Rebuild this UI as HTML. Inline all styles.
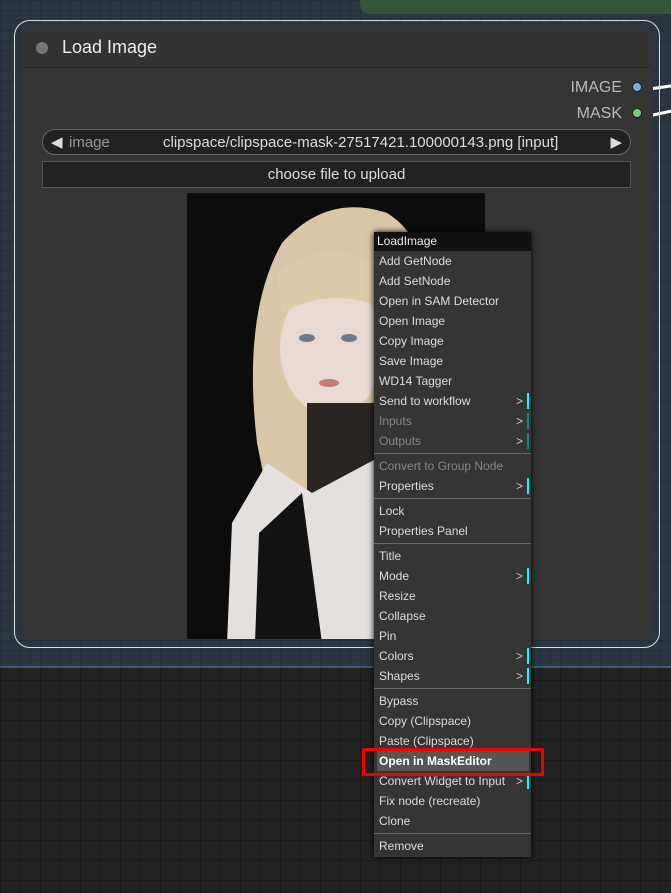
<!DOCTYPE html>
<html><head><meta charset="utf-8"><style>
*{margin:0;padding:0;box-sizing:border-box}
body{width:671px;height:893px;overflow:hidden;position:relative;font-family:"Liberation Sans",sans-serif;
background-color:#222;background-image:linear-gradient(#1a1a1a 1px,transparent 1px),linear-gradient(90deg,#1a1a1a 1px,transparent 1px);background-size:20px 20px}
.top{position:absolute;left:0;top:0;width:671px;height:668px;background-color:#2b3642;
background-image:linear-gradient(#26303b 1px,transparent 1px),linear-gradient(90deg,#26303b 1px,transparent 1px);background-size:10px 10px;border-bottom:2px solid #3d5a78}
.green{position:absolute;left:360px;top:-10px;width:330px;height:24px;background:#365535;border-radius:10px}
.outer{position:absolute;left:14px;top:20px;width:646px;height:628px;border:1.5px solid #ddd;border-radius:16px}
.node{position:absolute;left:22px;top:28px;width:631px;height:611px;background:#353535;border-radius:10px;overflow:hidden}
.title{position:absolute;left:0;top:0;width:100%;height:40px;border-bottom:1px solid #2a2a2a;background:#333}
.title .dot{position:absolute;left:14px;top:14px;width:12px;height:12px;border-radius:50%;background:#777}
.title span{position:absolute;left:40px;top:9px;color:#eee;font-size:18px}
.out{position:absolute;right:31px;color:#bbb;font-size:16px}
.sock{position:absolute;width:10px;height:10px;border-radius:50%;border:1px solid #222}
.combo{position:absolute;left:20px;top:101px;width:589px;height:26px;border:1px solid #666;border-radius:13px;background:#222;color:#ddd;font-size:15px}
.btn{position:absolute;left:20px;top:133px;width:589px;height:27px;border:1px solid #555;background:#222;color:#ddd;font-size:15px;text-align:center;line-height:25px}
.menu{position:absolute;left:374px;top:232px;width:157px;height:625px;background:#353535;box-shadow:0 0 6px #000;font-size:12px;color:#ddd}
.menu div{height:20px;line-height:20px;padding-left:5px;position:relative}
.menu .hd{background:#111;height:19px;line-height:18px;padding-left:3px;color:#eee}
.menu .dis{color:#888}
.menu div.sep{height:5px;padding:0;background:linear-gradient(transparent 2px,#666 2px,#666 3px,transparent 3px)}
.menu .sub::after{content:">";position:absolute;right:8px;color:#ccc}
.menu .sub::before{content:"";position:absolute;right:2px;top:2px;width:2px;height:16px;background:#0ff}
.menu .dis.sub::before{background:#0a8a8a}
.menu .hl{background:#555;color:#fff;font-weight:bold;margin:0 2px 0 3px;padding-left:2px}
.red{position:absolute;left:362px;top:748px;width:182px;height:28px;border:3px solid #e00}
</style></head><body>
<div class="top"></div>
<div class="green"></div>
<div style="position:absolute;left:645px;top:86px;width:30px;height:3px;background:#fff;transform:rotate(-8deg)"></div>
<div style="position:absolute;left:645px;top:112px;width:30px;height:3px;background:#fff;transform:rotate(-12deg)"></div>
<div class="outer"></div>
<div class="node">
 <div class="title"><div class="dot"></div><span>Load Image</span></div>
 <div class="out" style="top:51px">IMAGE</div><div class="sock" style="left:610px;top:54px;background:#6ab0f0"></div>
 <div class="out" style="top:77px">MASK</div><div class="sock" style="left:610px;top:80px;background:#80c880"></div>
 <div class="combo"><span style="position:absolute;left:8px;top:3px;color:#ddd">◀</span><span style="position:absolute;left:26px;top:4px;color:#999">image</span><span style="position:absolute;left:120px;top:4px">clipspace/clipspace-mask-27517421.100000143.png [input]</span><span style="position:absolute;right:8px;top:3px">▶</span></div>
 <div class="btn">choose file to upload</div>
 <svg style="position:absolute;left:165px;top:165px" width="298" height="450" viewBox="0 0 298 450">
  <rect width="298" height="450" fill="#0c0c0d"/>
  <path d="M70 250 Q55 120 95 50 Q140 0 200 20 Q250 50 240 150 L230 300 L80 300 Z" fill="#d8c7a6"/>
  <ellipse cx="145" cy="155" rx="52" ry="68" fill="#e9d9d3"/>
  <path d="M90 80 Q140 40 210 80 L205 120 Q150 90 95 120 Z" fill="#dccba8"/>
  <rect x="120" y="210" width="70" height="90" fill="#2a2522"/>
  <path d="M40 450 L45 330 L80 270 L125 300 L200 260 L200 450 Z" fill="#e4e0dd"/>
  <path d="M68 450 L72 340 L115 300 L135 450 Z" fill="#141313"/>
  <ellipse cx="120" cy="145" rx="8" ry="4" fill="#6a7a88"/><ellipse cx="162" cy="145" rx="8" ry="4" fill="#6a7a88"/>
  <ellipse cx="142" cy="190" rx="10" ry="4" fill="#c77a78"/>
 </svg>
</div>
<div class="menu">
 <div class="hd">LoadImage</div>
 <div>Add GetNode</div><div>Add SetNode</div><div>Open in SAM Detector</div><div>Open Image</div><div>Copy Image</div><div>Save Image</div><div>WD14 Tagger</div>
 <div class="sub">Send to workflow</div><div class="sub dis">Inputs</div><div class="sub dis">Outputs</div>
 <div class="sep"></div>
 <div class="dis">Convert to Group Node</div><div class="sub">Properties</div>
 <div class="sep"></div>
 <div>Lock</div><div>Properties Panel</div>
 <div class="sep"></div>
 <div>Title</div><div class="sub">Mode</div><div>Resize</div><div>Collapse</div><div>Pin</div><div class="sub">Colors</div><div class="sub">Shapes</div>
 <div class="sep"></div>
 <div>Bypass</div><div>Copy (Clipspace)</div><div>Paste (Clipspace)</div><div class="hl">Open in MaskEditor</div><div class="sub">Convert Widget to Input</div><div>Fix node (recreate)</div><div>Clone</div>
 <div class="sep"></div>
 <div>Remove</div>
</div>
<div class="red"></div>
</body></html>
